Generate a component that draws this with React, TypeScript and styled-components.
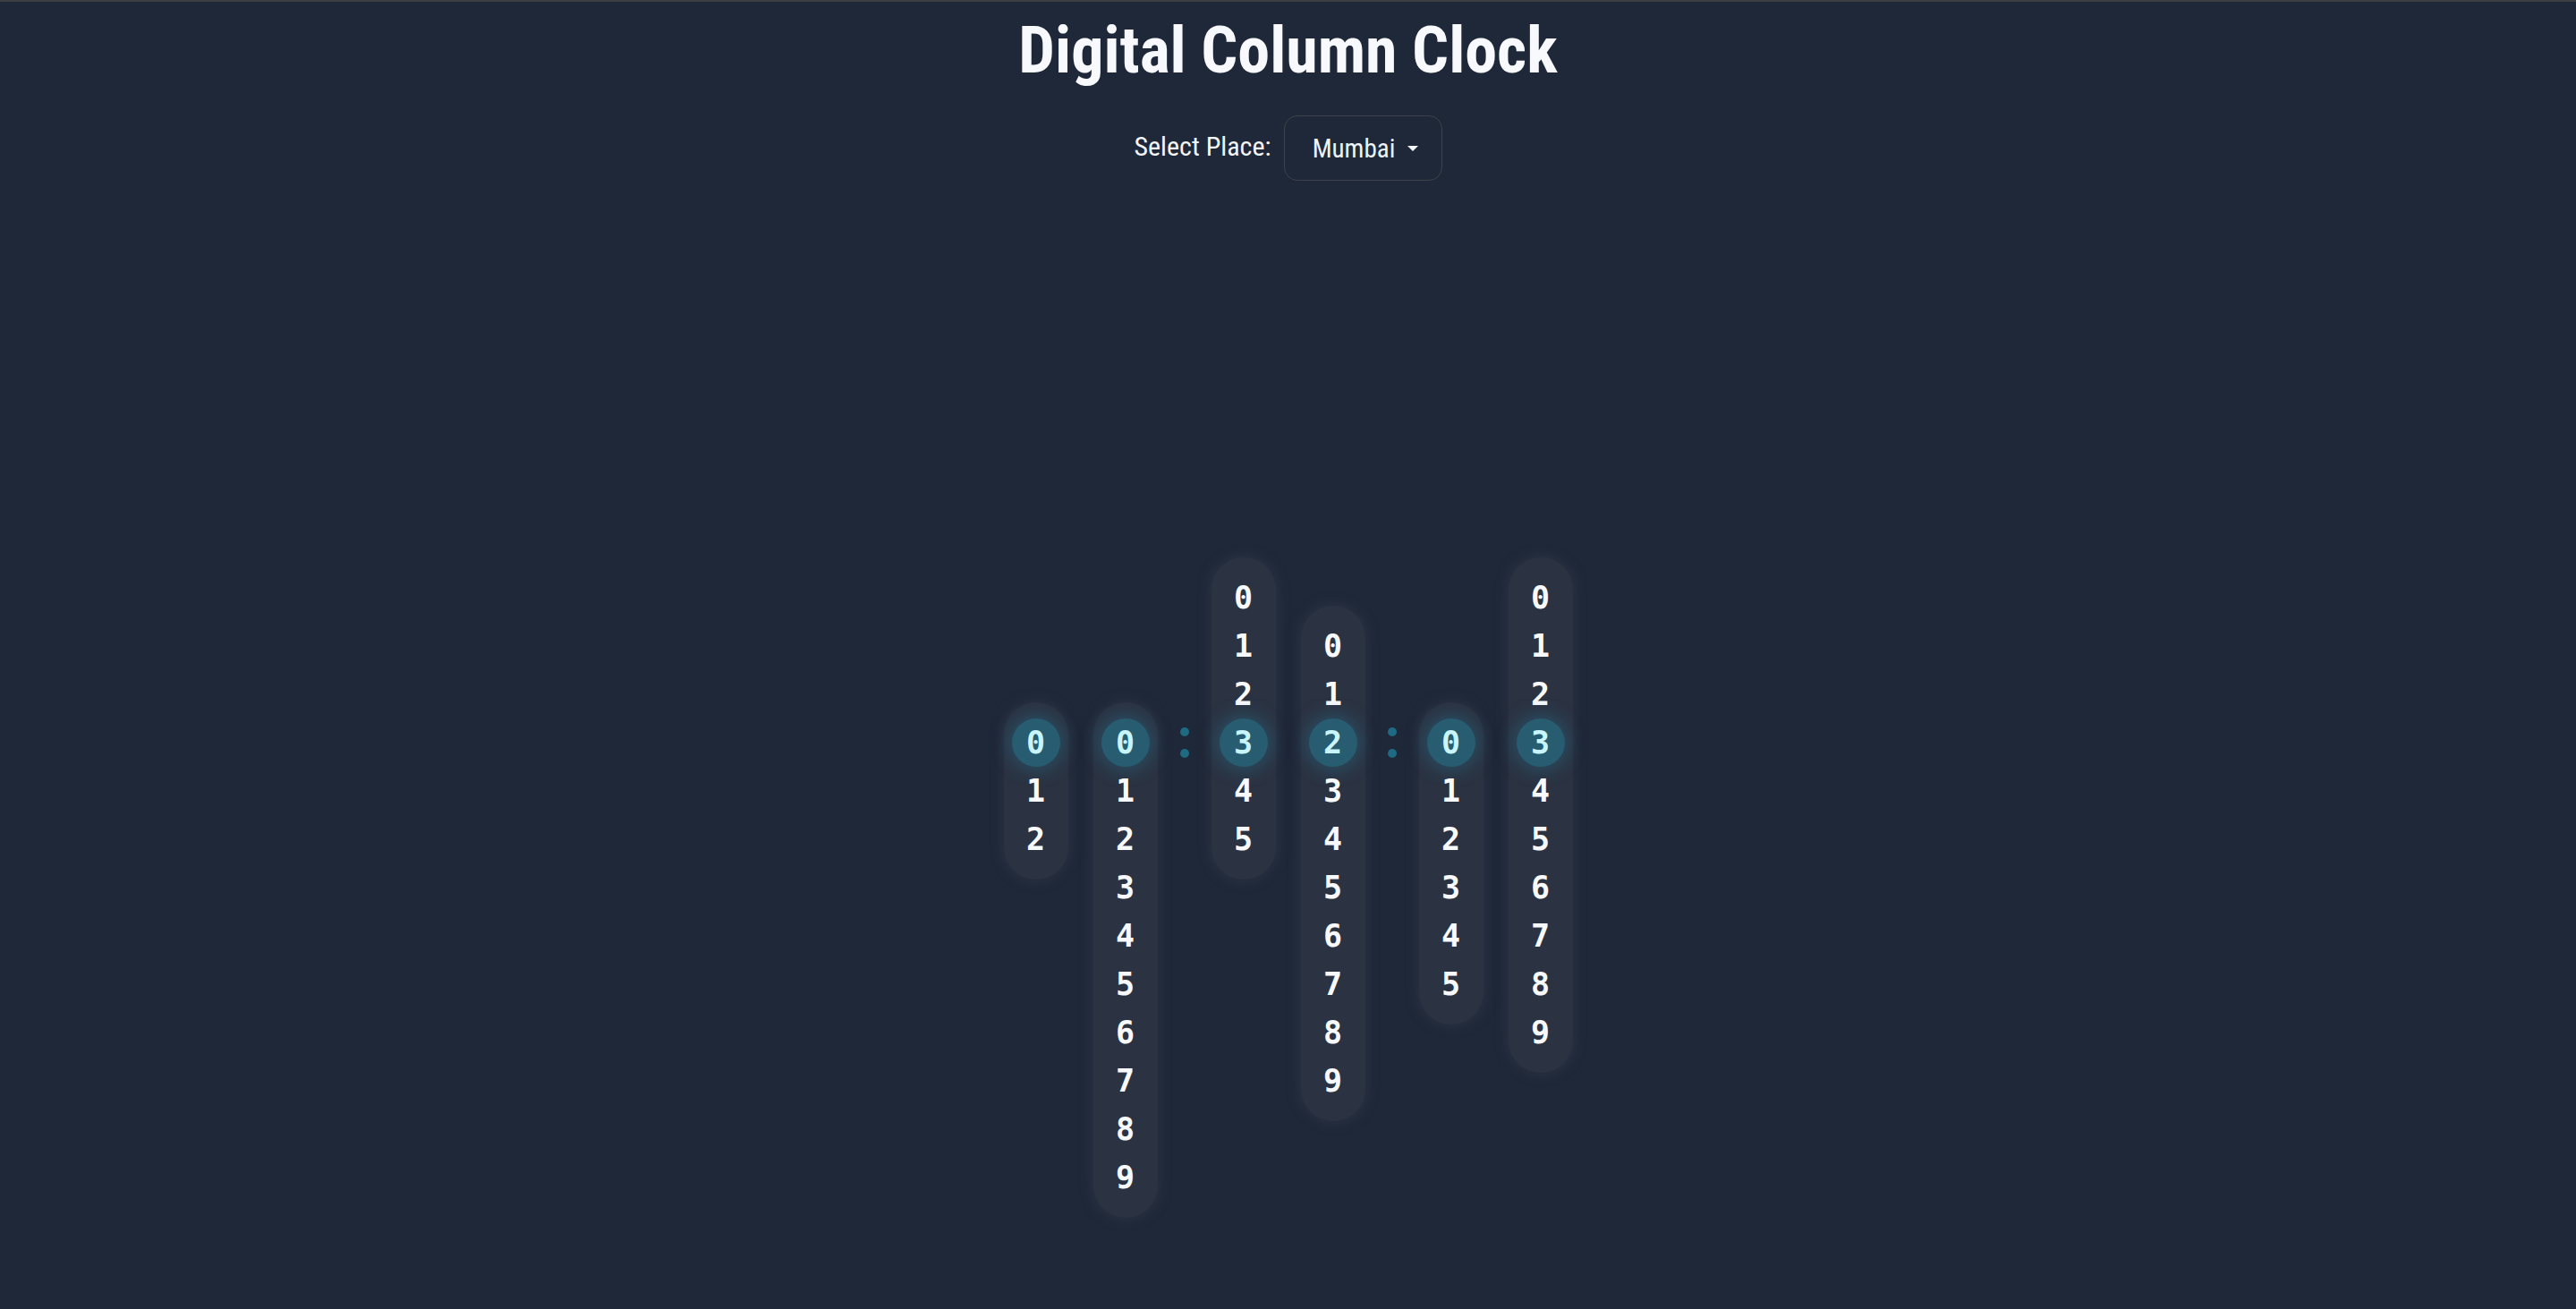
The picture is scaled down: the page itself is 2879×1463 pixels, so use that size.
import React from "react";
import styled, { createGlobalStyle } from "styled-components";

const GlobalStyle = createGlobalStyle`
  html, body {
    margin: 0;
    padding: 0;
    background: #1f2839;
  }
  * { box-sizing: border-box; }
`;

const Page = styled.div`
  min-height: 100vh;
  border-top: 2px solid #3b3e42;
  display: flex;
  flex-direction: column;
  align-items: center;
  font-family: "Roboto Condensed", "Liberation Sans Narrow", "Noto Sans", sans-serif;
  color: #f5f8fc;
`;

const Title = styled.h1`
  margin: 12px 0 0;
  font-size: 72px;
  line-height: 86px;
  font-weight: 700;
  color: #f7f9fc;
`;

const Controls = styled.div`
  display: flex;
  align-items: center;
  gap: 14px;
  margin-top: 29px;
`;

const Label = styled.label`
  font-size: 30px;
  color: #f3f6fa;
  padding-bottom: 4px;
`;

const SelectBox = styled.div`
  width: 177px;
  height: 73px;
  border: 1.5px solid #3e4247;
  border-radius: 15px;
  display: flex;
  align-items: center;
  justify-content: center;
  gap: 14px;
  font-size: 29px;
  color: #eef4fb;
  padding-left: 6px;
`;

const Caret = styled.span`
  width: 0;
  height: 0;
  border-left: 6px solid transparent;
  border-right: 6px solid transparent;
  border-top: 6px solid #f3f6fa;
`;

const Clock = styled.div`
  display: flex;
  align-items: flex-start;
  gap: 28px;
  margin-top: 583px;
`;

const CELL = 54;

const Column = styled.div<{ $offset: number }>`
  width: 72px;
  padding: 18px 0;
  border-radius: 36px;
  background: #2b3343;
  box-shadow: 0 0 12px 3px rgba(43, 51, 67, 0.85);
  display: flex;
  flex-direction: column;
  align-items: center;
  transform: translateY(${(p) => -p.$offset * CELL}px);
`;

const Digit = styled.div<{ $active: boolean }>`
  width: ${CELL}px;
  height: ${CELL}px;
  border-radius: 50%;
  display: flex;
  align-items: center;
  justify-content: center;
  font-family: "DejaVu Sans Mono", "Liberation Mono", monospace;
  font-weight: 700;
  font-size: 35px;
  color: ${(p) => (p.$active ? "#c7f5fb" : "#f7f9fc")};
  background: ${(p) => (p.$active ? "#285c70" : "transparent")};
  box-shadow: ${(p) =>
    p.$active ? "0 0 16px 6px rgba(40, 98, 120, 0.5)" : "none"};
`;

const Colon = styled.div`
  width: 10px;
  margin: 0 -3px;
  height: 90px;
  display: flex;
  flex-direction: column;
  align-items: center;
  justify-content: center;
  gap: 14px;
`;

const Dot = styled.span`
  width: 10px;
  height: 10px;
  border-radius: 50%;
  background: #1d6a82;
`;

const columns: { max: number; value: number }[] = [
  { max: 2, value: 0 },
  { max: 9, value: 0 },
  { max: 5, value: 3 },
  { max: 9, value: 2 },
  { max: 5, value: 0 },
  { max: 9, value: 3 },
];

function DigitColumn({ max, value }: { max: number; value: number }) {
  const digits = Array.from({ length: max + 1 }, (_, i) => i);
  return (
    <Column $offset={value}>
      {digits.map((d) => (
        <Digit key={d} $active={d === value}>
          {d}
        </Digit>
      ))}
    </Column>
  );
}

function Separator() {
  return (
    <Colon>
      <Dot />
      <Dot />
    </Colon>
  );
}

export default function App() {
  return (
    <>
      <GlobalStyle />
      <Page>
        <Title>Digital Column Clock</Title>
        <Controls>
          <Label>Select Place:</Label>
          <SelectBox>
            <span>Mumbai</span>
            <Caret />
          </SelectBox>
        </Controls>
        <Clock>
          <DigitColumn {...columns[0]} />
          <DigitColumn {...columns[1]} />
          <Separator />
          <DigitColumn {...columns[2]} />
          <DigitColumn {...columns[3]} />
          <Separator />
          <DigitColumn {...columns[4]} />
          <DigitColumn {...columns[5]} />
        </Clock>
      </Page>
    </>
  );
}
